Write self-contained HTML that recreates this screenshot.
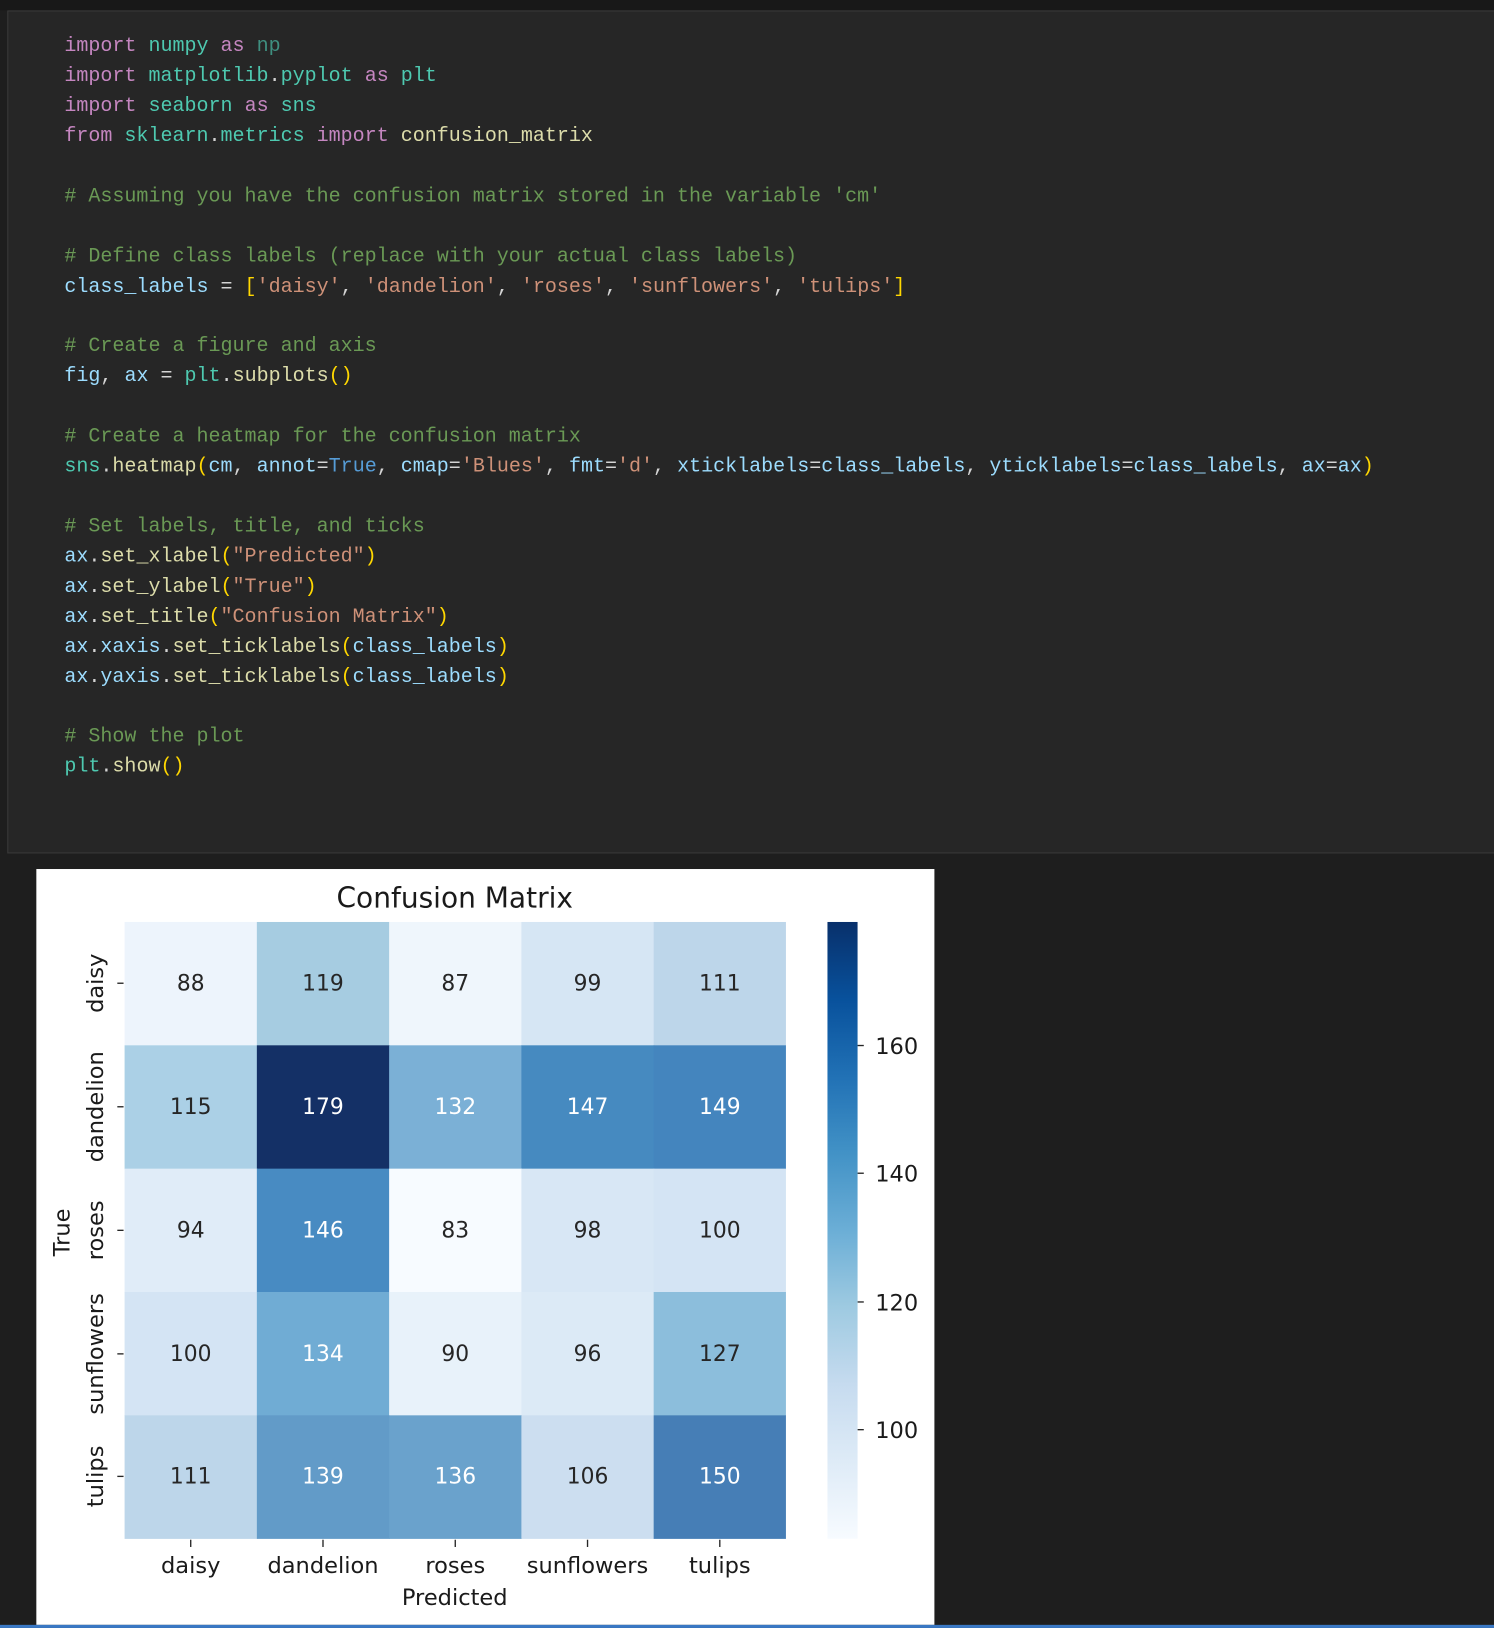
<!DOCTYPE html>
<html><head><meta charset="utf-8"><style>
html,body{margin:0;padding:0;background:#1e1e1e;}
svg{display:block}
.c{font-family:"Liberation Mono",monospace;font-size:19.3px;}
.k{fill:#c586c0}.m{fill:#4ec9b0}.v{fill:#9cdcfe}.f{fill:#dcdcaa}.s{fill:#ce9178}.g{fill:#6a9955}.b{fill:#ffd700}.t{fill:#569cd6}.p{fill:#d4d4d4}
.d{font-family:"DejaVu Sans","Liberation Sans",sans-serif;}
</style></head><body>
<svg width="1494" height="1628" viewBox="0 0 1439 1568" xmlns="http://www.w3.org/2000/svg">
<defs>
<linearGradient id="bl" x1="0" y1="1" x2="0" y2="0">
<stop offset="0" stop-color="#f7fbff"/><stop offset="0.125" stop-color="#deebf7"/><stop offset="0.25" stop-color="#c6dbef"/><stop offset="0.375" stop-color="#9ecae1"/><stop offset="0.5" stop-color="#6baed6"/><stop offset="0.625" stop-color="#4292c6"/><stop offset="0.75" stop-color="#2171b5"/><stop offset="0.875" stop-color="#08519c"/><stop offset="1" stop-color="#08306b"/>
</linearGradient>
</defs>
<rect x="0" y="0" width="1439" height="1568" fill="#1e1e1e"/>
<rect x="0" y="0" width="1439" height="10" fill="#181818"/>
<rect x="7.5" y="10.5" width="1440" height="811" fill="#262626" stroke="#3a3a3a"/>
<g class="c" xml:space="preserve">
<text x="62" y="49"><tspan class="k">import</tspan> <tspan class="m">numpy</tspan> <tspan class="k">as</tspan> <tspan style="fill:#3f8f80">np</tspan></text>
<text x="62" y="78"><tspan class="k">import</tspan> <tspan class="m">matplotlib</tspan><tspan class="p">.</tspan><tspan class="m">pyplot</tspan> <tspan class="k">as</tspan> <tspan class="m">plt</tspan></text>
<text x="62" y="107"><tspan class="k">import</tspan> <tspan class="m">seaborn</tspan> <tspan class="k">as</tspan> <tspan class="m">sns</tspan></text>
<text x="62" y="136"><tspan class="k">from</tspan> <tspan class="m">sklearn</tspan><tspan class="p">.</tspan><tspan class="m">metrics</tspan> <tspan class="k">import</tspan> <tspan class="f">confusion_matrix</tspan></text>
<text x="62" y="194" class="g"># Assuming you have the confusion matrix stored in the variable 'cm'</text>
<text x="62" y="252" class="g"># Define class labels (replace with your actual class labels)</text>
<text x="62" y="281"><tspan class="v">class_labels</tspan><tspan class="p"> = </tspan><tspan class="b">[</tspan><tspan class="s">'daisy'</tspan><tspan class="p">, </tspan><tspan class="s">'dandelion'</tspan><tspan class="p">, </tspan><tspan class="s">'roses'</tspan><tspan class="p">, </tspan><tspan class="s">'sunflowers'</tspan><tspan class="p">, </tspan><tspan class="s">'tulips'</tspan><tspan class="b">]</tspan></text>
<text x="62" y="338" class="g"># Create a figure and axis</text>
<text x="62" y="367"><tspan class="v">fig</tspan><tspan class="p">, </tspan><tspan class="v">ax</tspan><tspan class="p"> = </tspan><tspan class="m">plt</tspan><tspan class="p">.</tspan><tspan class="f">subplots</tspan><tspan class="b">()</tspan></text>
<text x="62" y="425" class="g"># Create a heatmap for the confusion matrix</text>
<text x="62" y="454"><tspan class="m">sns</tspan><tspan class="p">.</tspan><tspan class="f">heatmap</tspan><tspan class="b">(</tspan><tspan class="v">cm</tspan><tspan class="p">, </tspan><tspan class="v">annot</tspan><tspan class="p">=</tspan><tspan class="t">True</tspan><tspan class="p">, </tspan><tspan class="v">cmap</tspan><tspan class="p">=</tspan><tspan class="s">'Blues'</tspan><tspan class="p">, </tspan><tspan class="v">fmt</tspan><tspan class="p">=</tspan><tspan class="s">'d'</tspan><tspan class="p">, </tspan><tspan class="v">xticklabels</tspan><tspan class="p">=</tspan><tspan class="v">class_labels</tspan><tspan class="p">, </tspan><tspan class="v">yticklabels</tspan><tspan class="p">=</tspan><tspan class="v">class_labels</tspan><tspan class="p">, </tspan><tspan class="v">ax</tspan><tspan class="p">=</tspan><tspan class="v">ax</tspan><tspan class="b">)</tspan></text>
<text x="62" y="512" class="g"># Set labels, title, and ticks</text>
<text x="62" y="541"><tspan class="v">ax</tspan><tspan class="p">.</tspan><tspan class="f">set_xlabel</tspan><tspan class="b">(</tspan><tspan class="s">"Predicted"</tspan><tspan class="b">)</tspan></text>
<text x="62" y="570"><tspan class="v">ax</tspan><tspan class="p">.</tspan><tspan class="f">set_ylabel</tspan><tspan class="b">(</tspan><tspan class="s">"True"</tspan><tspan class="b">)</tspan></text>
<text x="62" y="599"><tspan class="v">ax</tspan><tspan class="p">.</tspan><tspan class="f">set_title</tspan><tspan class="b">(</tspan><tspan class="s">"Confusion Matrix"</tspan><tspan class="b">)</tspan></text>
<text x="62" y="628"><tspan class="v">ax</tspan><tspan class="p">.</tspan><tspan class="v">xaxis</tspan><tspan class="p">.</tspan><tspan class="f">set_ticklabels</tspan><tspan class="b">(</tspan><tspan class="v">class_labels</tspan><tspan class="b">)</tspan></text>
<text x="62" y="657"><tspan class="v">ax</tspan><tspan class="p">.</tspan><tspan class="v">yaxis</tspan><tspan class="p">.</tspan><tspan class="f">set_ticklabels</tspan><tspan class="b">(</tspan><tspan class="v">class_labels</tspan><tspan class="b">)</tspan></text>
<text x="62" y="714" class="g"># Show the plot</text>
<text x="62" y="743"><tspan class="m">plt</tspan><tspan class="p">.</tspan><tspan class="f">show</tspan><tspan class="b">()</tspan></text>
</g>
<rect x="35" y="837" width="865" height="728" fill="#ffffff"/>
<rect x="0" y="1565" width="1439" height="3" fill="#3a78c4"/>
<g class="d">
<text x="438" y="874" font-size="27" text-anchor="middle" fill="#1a1a1a">Confusion Matrix</text>
<!-- cells -->
<g>
<rect x="120" y="888" width="128" height="119.5" fill="rgb(237,244,252)"/>
<rect x="247.4" y="888" width="128" height="119.5" fill="rgb(166,204,225)"/>
<rect x="374.8" y="888" width="128" height="119.5" fill="rgb(239,246,252)"/>
<rect x="502.2" y="888" width="128" height="119.5" fill="rgb(214,230,244)"/>
<rect x="629.6" y="888" width="127.4" height="119.5" fill="rgb(189,214,234)"/>
<rect x="120" y="1006.8" width="128" height="119.5" fill="rgb(171,208,230)"/>
<rect x="247.4" y="1006.8" width="128" height="119.5" fill="rgb(20,48,102)"/>
<rect x="374.8" y="1006.8" width="128" height="119.5" fill="rgb(123,176,214)"/>
<rect x="502.2" y="1006.8" width="128" height="119.5" fill="rgb(70,138,192)"/>
<rect x="629.6" y="1006.8" width="127.4" height="119.5" fill="rgb(68,133,190)"/>
<rect x="120" y="1125.6" width="128" height="119.5" fill="rgb(224,236,248)"/>
<rect x="247.4" y="1125.6" width="128" height="119.5" fill="rgb(72,139,194)"/>
<rect x="374.8" y="1125.6" width="128" height="119.5" fill="rgb(247,251,255)"/>
<rect x="502.2" y="1125.6" width="128" height="119.5" fill="rgb(216,231,245)"/>
<rect x="629.6" y="1125.6" width="127.4" height="119.5" fill="rgb(212,228,244)"/>
<rect x="120" y="1244.4" width="128" height="119.5" fill="rgb(212,228,244)"/>
<rect x="247.4" y="1244.4" width="128" height="119.5" fill="rgb(112,172,212)"/>
<rect x="374.8" y="1244.4" width="128" height="119.5" fill="rgb(232,242,250)"/>
<rect x="502.2" y="1244.4" width="128" height="119.5" fill="rgb(220,234,246)"/>
<rect x="629.6" y="1244.4" width="127.4" height="119.5" fill="rgb(140,190,220)"/>
<rect x="120" y="1363.2" width="128" height="119" fill="rgb(189,214,234)"/>
<rect x="247.4" y="1363.2" width="128" height="119" fill="rgb(98,155,200)"/>
<rect x="374.8" y="1363.2" width="128" height="119" fill="rgb(106,162,204)"/>
<rect x="502.2" y="1363.2" width="128" height="119" fill="rgb(204,222,240)"/>
<rect x="629.6" y="1363.2" width="127.4" height="119" fill="rgb(70,126,182)"/>
</g>
<g font-size="21" text-anchor="middle">
<text x="183.7" y="954" fill="#262626">88</text><text x="311.1" y="954" fill="#262626">119</text><text x="438.5" y="954" fill="#262626">87</text><text x="565.9" y="954" fill="#262626">99</text><text x="693.3" y="954" fill="#262626">111</text>
<text x="183.7" y="1073" fill="#262626">115</text><text x="311.1" y="1073" fill="#fff">179</text><text x="438.5" y="1073" fill="#fff">132</text><text x="565.9" y="1073" fill="#fff">147</text><text x="693.3" y="1073" fill="#fff">149</text>
<text x="183.7" y="1192" fill="#262626">94</text><text x="311.1" y="1192" fill="#fff">146</text><text x="438.5" y="1192" fill="#262626">83</text><text x="565.9" y="1192" fill="#262626">98</text><text x="693.3" y="1192" fill="#262626">100</text>
<text x="183.7" y="1311" fill="#262626">100</text><text x="311.1" y="1311" fill="#fff">134</text><text x="438.5" y="1311" fill="#262626">90</text><text x="565.9" y="1311" fill="#262626">96</text><text x="693.3" y="1311" fill="#262626">127</text>
<text x="183.7" y="1429" fill="#262626">111</text><text x="311.1" y="1429" fill="#fff">139</text><text x="438.5" y="1429" fill="#fff">136</text><text x="565.9" y="1429" fill="#262626">106</text><text x="693.3" y="1429" fill="#fff">150</text>
</g>
<!-- y ticks -->
<g stroke="#262626" stroke-width="1.3">
<line x1="113" y1="947" x2="119" y2="947"/><line x1="113" y1="1066" x2="119" y2="1066"/><line x1="113" y1="1185" x2="119" y2="1185"/><line x1="113" y1="1304" x2="119" y2="1304"/><line x1="113" y1="1422" x2="119" y2="1422"/>
<line x1="183.7" y1="1483" x2="183.7" y2="1490"/><line x1="311.1" y1="1483" x2="311.1" y2="1490"/><line x1="438.5" y1="1483" x2="438.5" y2="1490"/><line x1="565.9" y1="1483" x2="565.9" y2="1490"/><line x1="693.3" y1="1483" x2="693.3" y2="1490"/>
<line x1="826" y1="1007" x2="832" y2="1007"/><line x1="826" y1="1130" x2="832" y2="1130"/><line x1="826" y1="1254" x2="832" y2="1254"/><line x1="826" y1="1377" x2="832" y2="1377"/>
</g>
<g font-size="21.7" fill="#1a1a1a" text-anchor="middle">
<text transform="translate(99,947) rotate(-90)">daisy</text>
<text transform="translate(99,1066) rotate(-90)">dandelion</text>
<text transform="translate(99,1185) rotate(-90)">roses</text>
<text transform="translate(99,1304) rotate(-90)">sunflowers</text>
<text transform="translate(99,1422) rotate(-90)">tulips</text>
<text transform="translate(67,1187) rotate(-90)">True</text>
<text x="183.7" y="1515">daisy</text><text x="311.1" y="1515">dandelion</text><text x="438.5" y="1515">roses</text><text x="565.9" y="1515">sunflowers</text><text x="693.3" y="1515">tulips</text>
<text x="438" y="1546">Predicted</text>
</g>
<g font-size="21.7" fill="#1a1a1a">
<text x="843" y="1015">160</text><text x="843" y="1138">140</text><text x="843" y="1262">120</text><text x="843" y="1385">100</text>
</g>
</g>
<rect x="797" y="888" width="29" height="594" fill="url(#bl)"/>
</svg>
</body></html>
